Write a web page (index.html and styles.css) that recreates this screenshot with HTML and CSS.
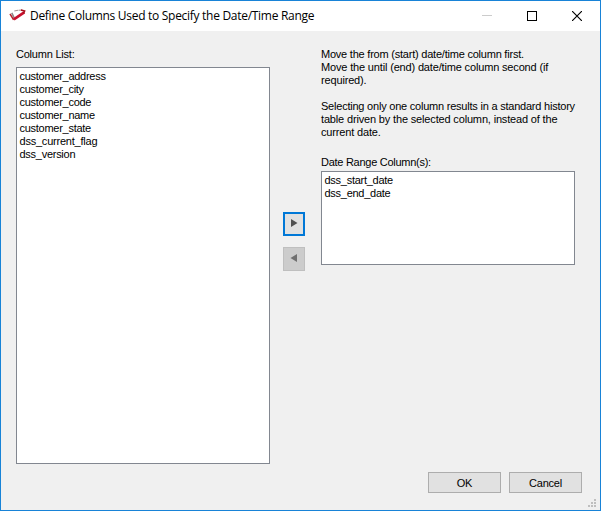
FILE: index.html
```html
<!DOCTYPE html>
<html lang="en">
<head>
<meta charset="utf-8">
<title>Define Columns Used to Specify the Date/Time Range</title>
<link rel="stylesheet" href="styles.css">
</head>
<body>
<div class="window">
  <header class="titlebar">
    <svg class="logo" width="18" height="16" viewBox="0 0 18 16">
      <path d="M5.3 3 9 2.2M9.5 2.2 13 2" stroke="#a79092" stroke-width="1.1" fill="none"/>
      <path d="M2.8 4.8 5.2 10" stroke="#8d8587" stroke-width="1.6" fill="none"/>
      <path d="M1 5.8 4.6 11.8" stroke="#b5222b" stroke-width="1.5" fill="none"/>
      <path d="M4.8 11.4 15.2 4.4" stroke="#c8102e" stroke-width="2.8" fill="none"/>
      <path d="M12 2 15.6 3 14.5 5.4" stroke="#a80e1a" stroke-width="1.6" fill="none"/>
    </svg>
    <h1 class="title">Define Columns Used to Specify the Date/Time Range</h1>
    <div class="controls">
      <svg width="10" height="10"><path d="M0 4.5H10" stroke="#ccc"/></svg>
      <svg width="10" height="10"><rect x=".5" y=".5" width="9" height="9" fill="none" stroke="#000"/></svg>
      <svg width="10" height="10"><path d="M0 0 10 10M10 0 0 10" stroke="#000" stroke-width="1.15"/></svg>
    </div>
  </header>
  <main class="content">
    <section class="left">
      <div class="label wide">Column List:</div>
      <ul class="list source">
        <li>customer_address</li>
        <li>customer_city</li>
        <li>customer_code</li>
        <li>customer_name</li>
        <li>customer_state</li>
        <li class="wide">dss_current_flag</li>
        <li>dss_version</li>
      </ul>
    </section>
    <div class="movers">
      <button class="move active" aria-label="Add"><svg width="8" height="8"><path d="M1 0 7.5 4 1 8Z" fill="#505050"/></svg></button>
      <button class="move disabled" aria-label="Remove" disabled><svg width="8" height="8"><path d="M7 0 .5 4 7 8Z" fill="#707070"/></svg></button>
    </div>
    <section class="right">
      <p class="help"><span class="wide">Move the from (start) date/time column first.</span><br><span class="wider">Move the until (end) date/time column second (if</span><br><span class="wider">required).</span></p>
      <p class="help"><span class="wide">Selecting only one column results in a standard history</span><br><span class="wider">table driven by the selected column, instead of the</span><br><span class="wider">current date.</span></p>
      <div class="label range">Date Range Column(s):</div>
      <ul class="list target">
        <li>dss_start_date</li>
        <li>dss_end_date</li>
      </ul>
    </section>
  </main>
  <footer class="footer">
    <button class="btn">OK</button>
    <button class="btn">Cancel</button>
  </footer>
  <svg class="grip" width="8" height="8" fill="#bfbfbf"><path d="M6 0h2v2H6zM3 3h2v2H3zM6 3h2v2H6zM0 6h2v2H0zM3 6h2v2H3zM6 6h2v2H6z"/></svg>
</div>
</body>
</html>
```
FILE: styles.css
```css
* { box-sizing: border-box; margin: 0; padding: 0; }
body { font: 11px/13px "Liberation Sans", Arial, sans-serif; color: #000; letter-spacing: -0.27px; }
svg { display: block; }
.window {
  position: relative; width: 601px; height: 511px;
  border: 1px solid #1883d7; background: #f0f0f0;
  display: flex; flex-direction: column;
}
.titlebar { height: 30px; background: #fff; display: flex; align-items: center; padding: 0 18px 0 8px; }
.logo { flex: none; margin-right: 3px; }
.title { font: 400 12px/16px "Open Sans", "Noto Sans", sans-serif; letter-spacing: -0.29px; white-space: nowrap; }
.controls { margin-left: auto; display: flex; gap: 35px; }
.content { display: flex; height: 433px; padding: 17px 0 0 15px; }
.left { width: 254px; }
.label { height: 13px; white-space: nowrap; }
.list { list-style: none; background: #fff; border: 1px solid #828790; padding: 2px; width: 254px; }
.list li { padding-left: 0.5px; }
.source { height: 397px; margin-top: 6px; }
.target { height: 94px; margin-top: 3px; }
.wide { letter-spacing: -0.22px; }
.wider { letter-spacing: -0.16px; }
.movers { width: 22px; margin: 164px 16px 0 13px; display: flex; flex-direction: column; gap: 11px; }
.move { width: 22px; height: 24px; display: flex; align-items: center; justify-content: center; padding-bottom: 2px; }
.active { border: 2px solid #0078d7; background: #e1e1e1; }
.disabled { border: 1px solid #bfbfbf; background: #ccc; }
.right { width: 260px; }
.help { height: 39px; margin-bottom: 13px; white-space: nowrap; }
.range { margin-top: 16px; padding-top: 1px; }
.footer { display: flex; gap: 8px; justify-content: flex-end; padding: 8px 18px 0 0; }
.btn { width: 73px; height: 21px; border: 1px solid #adadad; background: #e1e1e1; font: inherit; color: #000; letter-spacing: -0.2px; padding-top: 1px; }
.grip { position: absolute; right: 4px; bottom: 3px; }
```
